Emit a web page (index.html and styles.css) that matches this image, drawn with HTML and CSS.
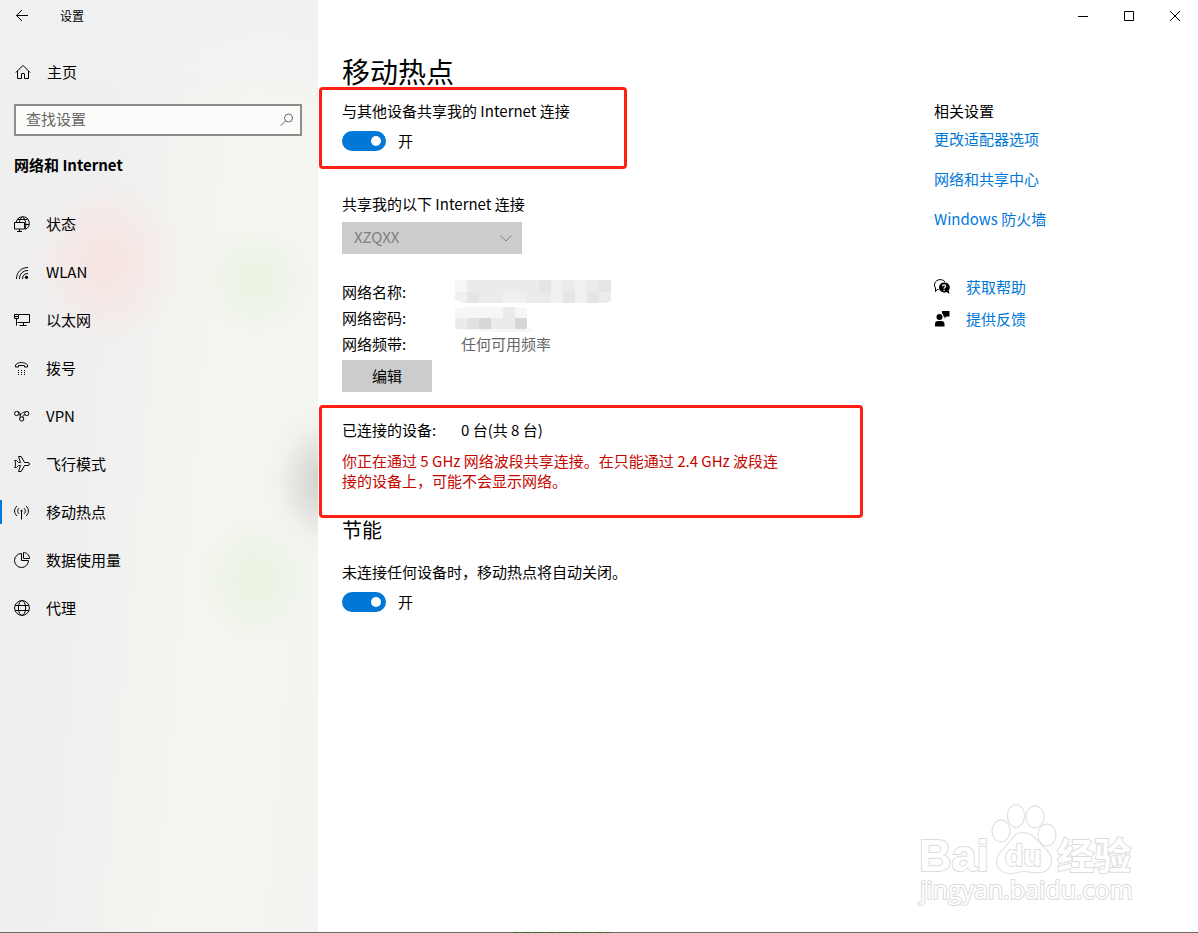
FILE: index.html
```html
<!DOCTYPE html>
<html lang="zh-CN">
<head>
<meta charset="utf-8">
<title>设置</title>
<link rel="stylesheet" href="styles.css">
</head>
<body>
<div class="window">
  <div class="panes">
    <aside class="sidebar">
      <header class="titlebar">
        <button class="back" type="button" aria-label="返回">
          <svg class="icon" viewBox="0 0 16 16"><path d="M14 7.500H2.500M8 2 2.500 7.500 8 13"/></svg>
        </button>
        <span class="app-name">设置</span>
      </header>
      <a class="home" href="#">
        <svg class="icon" viewBox="0 0 16 16"><path d="M.9 8.500 8 1.400 15.100 8.500M2.500 7V14.500H6.500V10Q6.500 9.500 7 9.500H9Q9.500 9.500 9.500 10V14.500H13.500V7"/></svg>
        <span>主页</span>
      </a>
      <label class="search">
        <input type="text" placeholder="查找设置" aria-label="查找设置">
        <svg class="search-icon" viewBox="0 0 14 14"><circle cx="8.500" cy="5" r="4"/><path d="M5.600 7.900.8 12.700"/></svg>
      </label>
      <h2 class="category">网络和 Internet</h2>
      <nav class="nav">
        <a href="#"><svg class="icon" viewBox="0 0 16 16"><path d="M2.300 6.500A6.500 6.500 0 1 1 11 13.400M3.500 3.500H13.500M10.500 8.500H15M8.500.7C6.500 2.500 5.500 4 5.500 6.500M8.500.7C11.800 3.500 12.500 8.500 11 13M.5 6.500H10.500V13H.5ZM5.500 13V15.500M3 15.500H8"/></svg><span>状态</span></a>
        <a href="#"><svg class="icon" viewBox="0 0 16 16"><path d="M2.500 15C2.500 8.500 7 3.500 14 3.500M5.500 15C5.500 10.200 8.700 6.500 14 6.500M8.500 15C8.500 11.500 10.500 9.500 14 9.500"/><circle class="solid" cx="12.500" cy="13.300" r="1.600"/></svg><span>WLAN</span></a>
        <a href="#"><svg class="icon" viewBox="0 0 16 16"><path d="M5 2.500H15.500V10.500H3.500M.5 2.500H4.500V6.500H.5ZM.5 4.500H4.500M2.500 6.500V13.500M9.500 10.500V13.500M5.500 13.500H12.500"/></svg><span>以太网</span></a>
        <a href="#"><svg class="icon" viewBox="0 0 16 16"><path d="M1.500 7V5.200C3 1.700 12 1.700 13.500 5.200V7H10.500V5.500H4.500V7Z"/><path class="solid" d="M4 10h1v1H4zM7 10h1v1H7zM10 10h1v1h-1zM4 12h1v1H4zM7 12h1v1H7zM10 12h1v1h-1zM4 14h1v1H4zM7 14h1v1H7zM10 14h1v1h-1z"/></svg><span>拨号</span></a>
        <a href="#"><svg class="icon" viewBox="0 0 16 16"><circle cx="2.600" cy="5.500" r="2.100"/><circle cx="12.800" cy="5.500" r="2.100"/><circle cx="7.700" cy="11" r="2.100"/><path d="M4 3.900C6 3 7 8 5.800 9.800M4.700 6.700C6.500 8 8.500 3.500 11.500 3.900M11 6.800C9 7 8.500 8 9.200 9.500"/></svg><span>VPN</span></a>
        <a href="#"><svg class="icon" viewBox="0 0 16 16"><path d="M.8 4.500H2.500L4.500 6.500H6.500L4.500.5H7.200L10.500 6.500H14Q15.500 7 15.500 8 15.500 9 14 9.500H10.500L7.200 15.500H4.500L6.500 9.500H4.500L2.500 11.500H.8L1.700 8Z"/></svg><span>飞行模式</span></a>
        <a class="active" href="#"><svg class="icon" viewBox="0 0 16 16"><path d="M3 2C-.2 4.800-.2 9.200 3 12M5.200 4C3.200 5.700 3.200 8.300 5.200 10M12 2C15.200 4.800 15.200 9.200 12 12M9.800 4C11.800 5.700 11.800 8.300 9.800 10M7.500 7V15.500"/><circle class="solid" cx="7.500" cy="6.800" r="1"/></svg><span>移动热点</span></a>
        <a href="#"><svg class="icon" viewBox="0 0 16 16"><path d="M7.500 1.500A7 7 0 1 0 14.500 8.500H7.500ZM9.500.5V6.500H15.500C15.500 3 12.500.5 9.500.5Z"/></svg><span>数据使用量</span></a>
        <a href="#"><svg class="icon" viewBox="0 0 16 16"><circle cx="8" cy="8" r="7.400"/><ellipse cx="8" cy="8" rx="3.600" ry="7.400"/><path d="M1.300 5.500H14.700M1.300 10.500H14.700"/></svg><span>代理</span></a>
      </nav>
    </aside>

    <div class="body">
      <div class="controls">
        <button type="button" aria-label="最小化"><svg viewBox="0 0 10 10"><path d="M0 5.500H10"/></svg></button>
        <button type="button" aria-label="最大化"><svg viewBox="0 0 10 10"><path d="M.5.5H9.500V9.500H.5Z"/></svg></button>
        <button type="button" aria-label="关闭"><svg viewBox="0 0 10 10"><path d="M0 0 10 10M10 0 0 10"/></svg></button>
      </div>
      <div class="columns">
        <main class="main">
          <h1>移动热点</h1>
          <section class="marked share">
            <label for="share">与其他设备共享我的 Internet 连接</label>
            <div class="toggle"><input id="share" type="checkbox" role="switch" checked><span>开</span></div>
          </section>
          <section class="group source">
            <label for="source">共享我的以下 Internet 连接</label>
            <div class="select">
              <select id="source" disabled><option>XZQXX</option></select>
              <svg viewBox="0 0 12 7"><path d="M.4.5 6 6.100 11.600.5"/></svg>
            </div>
          </section>
          <section class="group network">
            <dl class="facts">
              <dt>网络名称:</dt>
              <dd><svg class="mosaic" viewBox="0 0 156 23" width="156" height="23">
                <path fill="#ebebeb" d="M0 0H156V21L150 23H8L0 19Z"/>
                <path fill="#f6f6f6" d="M0 0H12V12H0Z"/>
                <path fill="#f0f0f0" d="M0 12H12V23L8 22 0 19ZM48 12H72V23H48ZM96 0H108V23H96ZM120 0H132V23H120Z"/>
                <path fill="#e5e5e5" d="M12 12H24V23H12ZM84 0H96V12H84ZM108 12H120V23H108ZM132 12H144V23H132ZM144 0H156V12H144Z"/>
              </svg></dd>
              <dt>网络密码:</dt>
              <dd><svg class="mosaic" viewBox="0 0 80 26" width="80" height="26">
                <path fill="#f6f6f6" d="M0 2Q36-1 72 2V23H80L74 26H40L0 23Z"/>
                <path fill="#ebebeb" d="M0 12H12V23H0ZM36 12H60V23H36ZM48 1H60V12H48Z"/>
                <path fill="#e2e2e2" d="M12 12H24V23H12Z"/>
                <path fill="#d7d7d7" d="M24 12H36V23H24ZM60 12H72V23H60Z"/>
              </svg></dd>
              <dt>网络频带:</dt>
              <dd class="band">任何可用频率</dd>
            </dl>
            <button class="edit" type="button">编辑</button>
          </section>
          <section class="marked clients">
            <dl class="facts">
              <dt>已连接的设备:</dt>
              <dd class="count">0 台(共 8 台)</dd>
            </dl>
            <p class="warning">你正在通过 5 GHz 网络波段共享连接。在只能通过 2.4 GHz 波段连接的设备上，可能不会显示网络。</p>
          </section>
          <section class="group power">
            <h2>节能</h2>
            <label for="power">未连接任何设备时，移动热点将自动关闭。</label>
            <div class="toggle"><input id="power" type="checkbox" role="switch" checked><span>开</span></div>
          </section>
        </main>
        <aside class="related">
          <h3>相关设置</h3>
          <a href="#">更改适配器选项</a>
          <a href="#">网络和共享中心</a>
          <a href="#">Windows 防火墙</a>
          <div class="support">
            <svg viewBox="0 0 16 16"><path class="line" d="M4.500 10.500H3L1.500 12.500V9A5.500 5 0 1 1 11 2.800"/><path class="solid" d="M10 3.500A5 5 0 0 0 10 13.500Q11.500 13.500 12.500 13L15.500 15 14.700 11.500A5 5 0 0 0 10 3.500Z"/><path class="mark" d="M8.500 7.200C8.500 5.300 11.700 5.300 11.700 7.200 11.700 8.400 10.100 8.300 10.100 9.700M10.100 10.700V11.900"/></svg>
            <a href="#">获取帮助</a>
          </div>
          <div class="support">
            <svg viewBox="0 0 16 16"><circle class="solid" cx="5.500" cy="6" r="3"/><path class="solid" d="M1 15.500V13Q1 10 4 10H7Q10.500 10 10.500 13V15.500ZM8 0H15.500V5.500H12.500L10.500 7.500V5.500H9.500Q9.500 3 8 2.200Z"/></svg>
            <a href="#">提供反馈</a>
          </div>
        </aside>
      </div>
    </div>
  </div>
  <footer class="taskbar-edge"></footer>
  <svg class="watermark" viewBox="0 0 222 112" role="img" aria-label="Baidu 经验">
    <g>
      <ellipse cx="85" cy="31" rx="8.500" ry="10.500"/><ellipse cx="100" cy="16" rx="8" ry="11"/><ellipse cx="119" cy="17" rx="8.500" ry="10.500"/><ellipse cx="131" cy="35" rx="8.500" ry="10.500"/>
      <path d="M107 33C98 33 95 42 88 49 76 60 81 72 93 73 101 73 103 71 108 71S117 73 125 72C136 70 139 58 129 49 121 42 117 33 107 33Z"/>
      <text class="brand" x="3" y="71">Bai</text>
      <text class="du" x="89" y="66">du</text>
      <text class="cn" x="141" y="70">经验</text>
      <text class="url" x="4" y="99">jingyan.baidu.com</text>
    </g>
  </svg>
</div>
</body>
</html>
```

FILE: styles.css
```css
* { box-sizing: border-box; }

body {
  margin: 0;
  background: #fff;
  color: #000;
  font: 15px/20px "Noto Sans CJK SC", sans-serif;
}

h1, h2, h3, p, dl, dd { margin: 0; font-weight: 400; }
a { color: inherit; text-decoration: none; }
button, input, select { font: inherit; color: inherit; }
label { display: block; }

.window {
  position: relative;
  display: flex;
  flex-direction: column;
  min-height: 100vh;
}

.panes { display: flex; flex: 1; }

/* Sidebar */
.sidebar {
  flex: 0 0 318px;
  background:
    radial-gradient(ellipse 76px 84px at 106px 262px, #f7e4e0 0%, #f7e6e3aa 45%, #f7e6e300 100%),
    radial-gradient(ellipse 54px 56px at 256px 280px, #e9f3e2 0%, #e9f3e2aa 45%, #e9f3e200 100%),
    radial-gradient(ellipse 58px 66px at 256px 580px, #e9f3e2 0%, #e9f3e2aa 45%, #e9f3e200 100%),
    radial-gradient(ellipse 60px 76px at 324px 482px, #cececc 0%, #d4d4d299 40%, #e4e4e233 75%, #e4e4e200 100%),
    linear-gradient(180deg, #eff1f3 0%, #eff1f300 12%),
    linear-gradient(95deg, #efefef 0%, #efefef 30%, #f5f5f0 66%, #f3f4f1 100%);
}

.titlebar { display: flex; align-items: center; height: 32px; }

.back {
  display: flex;
  width: 46px;
  height: 32px;
  padding: 0 0 0 14px;
  align-items: center;
  border: 0;
  background: none;
}

.app-name { padding-left: 14px; font-size: 12px; }

.icon {
  flex: none;
  width: 16px;
  height: 16px;
  fill: none;
  stroke: #000;
  stroke-width: 1;
}

.icon .solid { fill: #000; stroke: none; }

.home {
  display: flex;
  align-items: center;
  gap: 16px;
  margin-top: 24px;
  padding-left: 15px;
  height: 32px;
}

.search {
  display: flex;
  align-items: center;
  height: 32px;
  margin: 16px 16px 0 14px;
  padding: 0 6px 0 10px;
  border: 2px solid #8d8d8b;
  background: #fbfbfa;
}

.search input {
  flex: 1;
  min-width: 0;
  padding: 0 0 2px;
  border: 0;
  outline: 0;
  background: none;
}

.search input::placeholder { color: #666; opacity: 1; }
.search-icon { width: 14px; height: 14px; fill: none; stroke: #666; }

.category {
  margin-top: 19px;
  padding-left: 14px;
  font-size: 15px;
  font-weight: 700;
}

.nav { margin-top: 25px; }

.nav a {
  display: flex;
  align-items: center;
  gap: 16px;
  height: 48px;
  padding-left: 14px;
}

.nav .active {
  background: linear-gradient(#0078d7, #0078d7) left center / 2px 24px no-repeat;
}

/* Content */
.body { flex: 1; min-width: 0; }
.controls { display: flex; justify-content: flex-end; height: 32px; }

.controls button {
  display: flex;
  align-items: center;
  justify-content: center;
  width: 46px;
  padding: 0;
  border: 0;
  background: none;
}

.controls svg { width: 10px; height: 10px; fill: none; stroke: #000; }

.columns {
  display: grid;
  grid-template-columns: minmax(0, 544px) minmax(0, 1fr);
  gap: 71px;
  padding: 24px 24px 24px 1px;
}

h1 {
  margin-bottom: 1px;
  padding-left: 23px;
  font-size: 28px;
  line-height: 30px;
}

.marked {
  padding-left: 20px;
  border: 3px solid #ff1f13;
  border-radius: 4px;
}

.share { max-width: 308px; padding-top: 11px; padding-bottom: 15px; }
.group { padding-left: 23px; }

.toggle {
  display: flex;
  align-items: center;
  gap: 12px;
  margin-top: 10px;
}

.toggle input {
  appearance: none;
  display: flex;
  align-items: center;
  justify-content: flex-end;
  width: 44px;
  height: 20px;
  margin: 0;
  padding-right: 5px;
  border-radius: 10px;
  background: #0078d7;
}

.toggle input::before {
  content: "";
  width: 10px;
  height: 10px;
  border-radius: 50%;
  background: #fff;
}

.source { margin-top: 25px; }

.select {
  display: flex;
  align-items: center;
  width: 180px;
  height: 32px;
  margin-top: 8px;
  padding: 0 10px 0 12px;
  background: #ccc;
}

.select select {
  appearance: none;
  flex: 1;
  min-width: 0;
  padding: 0 0 2px;
  border: 0;
  background: none;
  color: #7f7f7f;
  opacity: 1;
}

.select svg { width: 12px; height: 7px; fill: none; stroke: #7f7f7f; }

.network { margin-top: 25px; }
.facts { display: grid; grid-template-columns: 113px minmax(0, 1fr); }
.network .facts { grid-auto-rows: 26px; line-height: 26px; }
.mosaic { display: block; margin-top: 1px; }
.band { padding-left: 6px; color: #666; }
.count { padding-left: 6px; }

.edit {
  display: block;
  width: 90px;
  height: 32px;
  margin-top: 3px;
  padding: 0;
  border: 0;
  background: #ccc;
}

.clients { margin-top: 13px; padding-top: 12px; padding-bottom: 24px; }
.warning { max-width: 440px; margin-top: 11px; color: #c50500; }

.power h2 { margin-bottom: 20px; font-size: 20px; line-height: 24px; }

.related { display: flex; flex-direction: column; padding-top: 45px; }
.related h3 { margin-bottom: 8px; font-size: 15px; }
.related a { color: #0078d7; }
.related > a { margin-bottom: 20px; }

.support {
  display: flex;
  align-items: center;
  gap: 16px;
  margin-bottom: 12px;
}

.related > a + .support { margin-top: 28px; }
.support svg { width: 16px; height: 16px; }
.support .line { fill: none; stroke: #000; }
.support .mark { fill: none; stroke: #fff; stroke-width: 1.2; }

.taskbar-edge {
  height: 1px;
  background:
    repeating-linear-gradient(90deg, #2e6b2e 0 5px, #5c6a5c 5px 8px, #3d6b2a 8px 12px) 514px 0 / 96px 1px no-repeat,
    #6b6b6b;
}

.watermark {
  position: absolute;
  right: 60px;
  bottom: 21px;
  width: 222px;
  height: 112px;
  fill: #fff;
  stroke: #dcdcdc;
  stroke-width: 2;
  paint-order: stroke;
}

.brand { font: 700 45px "Liberation Sans", sans-serif; }
.du { font: 700 30px "Liberation Sans", sans-serif; }
.cn { font: 700 37px "Noto Sans CJK SC", sans-serif; }
.url { font: 400 25px "Open Sans", sans-serif; }
```
